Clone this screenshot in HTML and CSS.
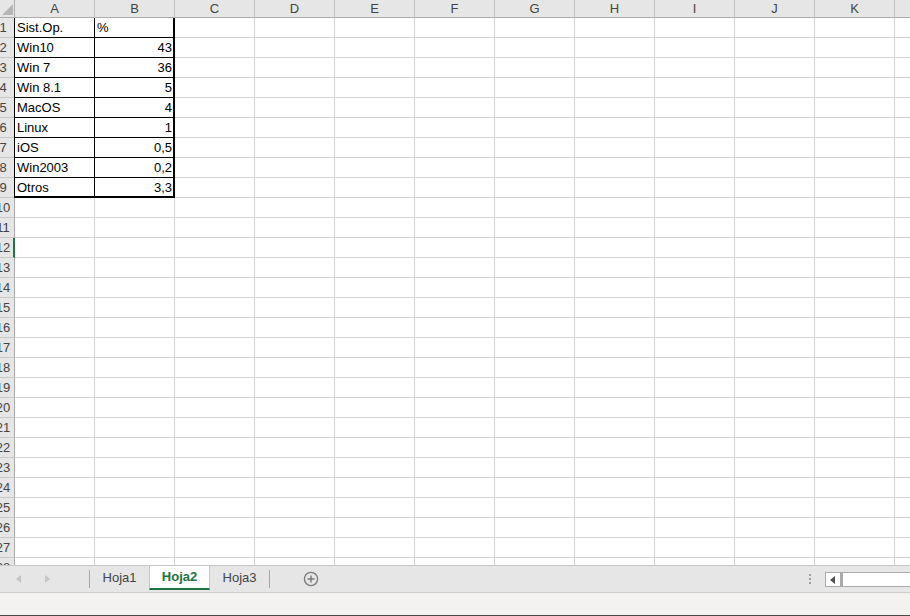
FILE: index.html
```html
<!DOCTYPE html>
<html lang="es">
<head>
    <meta charset="UTF-8">
    <meta name="viewport" content="width=device-width, initial-scale=1.0">
    <title>Hoja2</title>
    <link rel="stylesheet" href="styles.css">
</head>
<body>
    <div class="sheet" id="sheet"></div>

    <div class="tabs">
        <div class="nav">
            <svg width="5" height="8" viewBox="0 0 5 8" class="arrow-l"><path d="M5 0 L0 4 L5 8 Z" fill="#c4c4c4"/></svg>
            <svg width="5" height="8" viewBox="0 0 5 8" class="arrow-r"><path d="M0 0 L5 4 L0 8 Z" fill="#c4c4c4"/></svg>
        </div>
        <div class="sep"></div>
        <div class="tab">Hoja1</div>
        <div class="tab active">Hoja2</div>
        <div class="tab">Hoja3</div>
        <div class="sep"></div>
        <div class="add">
            <svg width="16" height="16" viewBox="0 0 16 16">
                <circle cx="8" cy="8" r="6.6" fill="none" stroke="#7a7a7a" stroke-width="1.3"/>
                <path d="M8 4.5 V11.5 M4.5 8 H11.5" stroke="#7a7a7a" stroke-width="1.4"/>
            </svg>
        </div>
        <div class="spacer"></div>
        <div class="dots"><i></i><i></i><i></i></div>
        <div class="hscroll">
            <div class="hs-btn">
                <svg width="5" height="8" viewBox="0 0 5 8"><path d="M5 0 L0 4 L5 8 Z" fill="#505050"/></svg>
            </div>
            <div class="hs-track"></div>
        </div>
    </div>
    <div class="status"></div>
    <div class="edge"></div>

    <script>
        // column L is only partly on screen, its letter falls outside
        const cols = ["A", "B", "C", "D", "E", "F", "G", "H", "I", "J", "K", ""];
        const data = [
            ["Sist.Op.", "%"],
            ["Win10", "43"],
            ["Win 7", "36"],
            ["Win 8.1", "5"],
            ["MacOS", "4"],
            ["Linux", "1"],
            ["iOS", "0,5"],
            ["Win2003", "0,2"],
            ["Otros", "3,3"]
        ];
        const sheet = document.getElementById("sheet");

        function cell(cls, text) {
            const d = document.createElement("div");
            d.className = cls;
            if (text !== undefined) d.textContent = text;
            sheet.appendChild(d);
            return d;
        }

        // header row
        const corner = cell("corner");
        corner.innerHTML = '<svg width="11" height="11" viewBox="0 0 11 11"><path d="M11 0 V11 H0 Z" fill="#b5b5b5"/></svg>';
        cols.forEach(c => cell("colhead", c));

        for (let r = 1; r <= 28; r++) {
            const rh = cell(r === 12 ? "rowhead current" : "rowhead");
            rh.innerHTML = "<span>" + r + "</span>";
            const row = data[r - 1];
            cols.forEach((c, i) => {
                let cls = "cell";
                let text;
                if (row && i < 2) {
                    cls += " t";
                    if (i === 0) cls += " first";
                    if (i === 1) cls += " last";
                    if (r === data.length) cls += " bottom";
                    if (i === 1 && r > 1) cls += " num";
                    text = row[i];
                }
                cell(cls, text);
            });
        }
    </script>
</body>
</html>
```

FILE: styles.css
```css
body {
    margin: 0;
    width: 910px;
    height: 616px;
    overflow: hidden;
    font-family: "Liberation Sans", Arial, sans-serif;
    font-size: 13px;
    color: #000;
    background: #fff;
}
.sheet {
    height: 565px;
    overflow: hidden;
    display: grid;
    grid-template-columns: 15px repeat(12, 80px);
    grid-template-rows: 18px;
    grid-auto-rows: 20px;
}
.sheet > div {
    box-sizing: border-box;
    white-space: nowrap;
    overflow: hidden;
}
.corner {
    background: #e6e6e6;
    border-right: 1px solid #ababab;
    border-bottom: 1px solid #ababab;
    display: flex;
    align-items: flex-end;
    justify-content: flex-end;
    padding: 0 1px 2px 0;
}
.corner svg {
    display: block;
}
.colhead {
    background: #e6e6e6;
    color: #444;
    text-align: center;
    line-height: 17px;
    border-right: 1px solid #c0c0c0;
    border-bottom: 1px solid #ababab;
}
.rowhead {
    background: #e6e6e6;
    color: #444;
    line-height: 19px;
    border-right: 1px solid #ababab;
    border-bottom: 1px solid #c8c8c8;
}
.rowhead span {
    display: block;
    width: 20px;
    margin-left: -7px;
    text-align: center;
}
.rowhead.current {
    border-right: 2px solid #217346;
}
.cell {
    border-right: 1px solid #d4d4d4;
    border-bottom: 1px solid #d4d4d4;
    line-height: 19px;
    padding: 0 2px;
}
.cell.t {
    border-right-color: #000;
    border-bottom-color: #000;
}
.cell.first {
    box-shadow: -1px 0 0 #000;
}
.cell.last {
    border-right-width: 2px;
}
.cell.bottom {
    border-bottom-width: 2px;
}
.cell.num {
    text-align: right;
    padding-right: 1px;
}

.tabs {
    height: 26px;
    border-top: 1px solid #c6c6c6;
    background: #e6e6e6;
    display: flex;
    align-items: flex-start;
    color: #444;
}
.nav {
    width: 89px;
    height: 26px;
    position: relative;
}
.nav svg {
    position: absolute;
    top: 9px;
}
.arrow-l {
    left: 16px;
}
.arrow-r {
    left: 45px;
}
.sep {
    width: 1px;
    height: 18px;
    margin-top: 4px;
    background: #a6a6a6;
}
.tab {
    width: 59px;
    height: 24px;
    line-height: 24px;
    text-align: center;
}
.tab.active {
    box-sizing: border-box;
    width: 61px;
    height: 24px;
    line-height: 22px;
    background: #fff;
    color: #217346;
    font-weight: bold;
    border-left: 1px solid #c6c6c6;
    border-right: 1px solid #c6c6c6;
    border-bottom: 2px solid #217346;
}
.add {
    width: 26px;
    height: 26px;
    margin-left: 28px;
    display: flex;
    align-items: center;
    justify-content: center;
}
.spacer {
    flex: 1;
}
.dots {
    width: 2px;
    margin-top: 8px;
    margin-right: 14px;
    display: flex;
    flex-direction: column;
    gap: 2px;
}
.dots i {
    display: block;
    width: 2px;
    height: 2px;
    background: #a0a0a0;
}
.hscroll {
    width: 85px;
    height: 15px;
    margin-top: 6px;
    display: flex;
}
.hs-btn {
    box-sizing: border-box;
    width: 16px;
    height: 15px;
    border: 1px solid #ababab;
    background: #fff;
    display: flex;
    align-items: center;
    padding-left: 4px;
}
.hs-track {
    flex: 1;
    box-sizing: border-box;
    height: 15px;
    background: #fff;
    border-top: 1px solid #ababab;
    border-bottom: 1px solid #ababab;
    border-left: 2px solid #ababab;
}
.status {
    height: 22px;
    background: #f3f2f1;
    border-top: 1px solid #cfcfcf;
}
.edge {
    height: 2px;
    background: #4a4a4a;
}
```
